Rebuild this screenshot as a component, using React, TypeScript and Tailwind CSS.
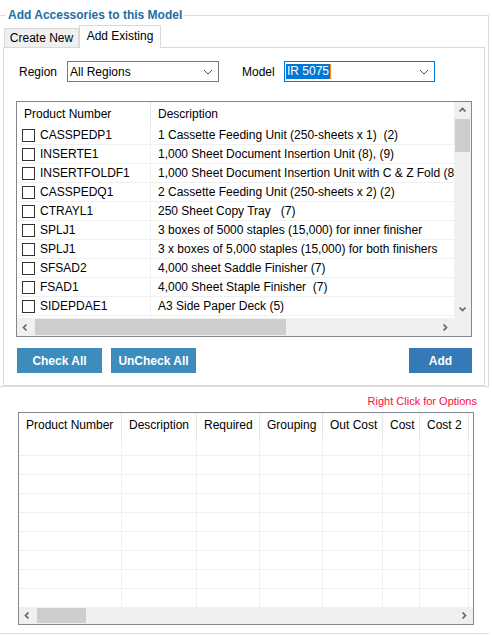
import React from "react";

const ITEMS: { code: string; desc: string }[] = [
  { code: "CASSPEDP1", desc: "1 Cassette Feeding Unit (250-sheets x 1)  (2)" },
  { code: "INSERTE1", desc: "1,000 Sheet Document Insertion Unit (8), (9)" },
  { code: "INSERTFOLDF1", desc: "1,000 Sheet Document Insertion Unit with C & Z Fold (8), (9)" },
  { code: "CASSPEDQ1", desc: "2 Cassette Feeding Unit (250-sheets x 2) (2)" },
  { code: "CTRAYL1", desc: "250 Sheet Copy Tray   (7)" },
  { code: "SPLJ1", desc: "3 boxes of 5000 staples (15,000) for inner finisher" },
  { code: "SPLJ1", desc: "3 x boxes of 5,000 staples (15,000) for both finishers" },
  { code: "SFSAD2", desc: "4,000 sheet Saddle Finisher (7)" },
  { code: "FSAD1", desc: "4,000 Sheet Staple Finisher  (7)" },
  { code: "SIDEPDAE1", desc: "A3 Side Paper Deck (5)" },
];

const COLUMNS: { label: string; width: string }[] = [
  { label: "Product Number", width: "w-[103px]" },
  { label: "Description", width: "w-[75px]" },
  { label: "Required", width: "w-[63px]" },
  { label: "Grouping", width: "w-[63px]" },
  { label: "Out Cost", width: "w-[60px]" },
  { label: "Cost", width: "w-[37px]" },
  { label: "Cost 2", width: "w-[49px]" },
];

function Arrow({ dir }: { dir: "up" | "down" | "left" | "right" }) {
  const d = {
    up: "M1.5 5.5 L4.5 2.5 L7.5 5.5",
    down: "M1.5 2.5 L4.5 5.5 L7.5 2.5",
    left: "M5.5 1.5 L2.5 4.5 L5.5 7.5",
    right: "M2.5 1.5 L5.5 4.5 L2.5 7.5",
  }[dir];
  return (
    <svg width="9" height="9" viewBox="0 0 9 9">
      <path d={d} fill="none" stroke="#606060" strokeWidth="1.6" />
    </svg>
  );
}

function Chevron() {
  return (
    <svg width="10" height="6" viewBox="0 0 10 6">
      <path d="M1 1 L5 5 L9 1" fill="none" stroke="#4d4d4d" strokeWidth="1" />
    </svg>
  );
}

function Checkbox() {
  return <span className="h-[13px] w-[13px] shrink-0 border border-[#333333] bg-white" />;
}

function Button({ label, className }: { label: string; className: string }) {
  return (
    <button className={`h-[25px] text-[12px] font-bold text-white ${className}`}>{label}</button>
  );
}

export default function App() {
  return (
    <div className="h-[635px] w-[492px] overflow-hidden bg-white font-['Liberation_Sans',Arial,sans-serif] text-[12px] text-black">
      <fieldset className="mt-[7px] w-[489px] border border-l-0 border-[#dcdcdc]">
        <legend className="ml-[6px] px-[2px] text-[12px] leading-[16px] font-bold text-[#236ea6]">
          Add Accessories to this Model
        </legend>

        <div className="flex h-[24px] items-end pl-[4px]">
          <div className="flex h-[19px] w-[75px] items-center justify-center border border-b-0 border-[#d9d9d9] bg-[#f0f0f0]">
            Create New
          </div>
          <div className="relative z-10 -mb-px flex h-[23px] w-[82px] items-center justify-center border border-b-0 border-[#d9d9d9] bg-white pb-[2px]">
            Add Existing
          </div>
        </div>

        <div className="ml-[3px] h-[339px] w-[482px] border border-[#d9d9d9] bg-white">
          {/* filters */}
          <div className="mt-[13px] flex h-[21px] items-center">
            <span className="ml-[15px] w-[48px]">Region</span>
            <div className="flex h-[21px] w-[152px] items-center justify-between border border-[#7a7a7a] pr-[5px] pl-[2px]">
              <span>All Regions</span>
              <Chevron />
            </div>
            <span className="ml-[23px] w-[42px]">Model</span>
            <div className="flex h-[21px] w-[151px] items-center justify-between border border-[#0078d7] pr-[5px] pl-[1px]">
              <span className="border-r border-[#ff8c1a] bg-[#0078d7] pr-[1px] pl-[1px] leading-[15px] text-white">
                IR 5075
              </span>
              <Chevron />
            </div>
          </div>

          {/* accessory list */}
          <div className="mt-[19px] ml-[12px] flex h-[236px] w-[456px] flex-col border border-[#828790]">
            <div className="flex h-[216px]">
              <div className="w-[437px] overflow-hidden">
                <div className="flex h-[24px] items-center">
                  <div className="w-[134px] border-r border-[#e5e5e5] pl-[7px] leading-[24px]">Product Number</div>
                  <div className="pl-[7px]">Description</div>
                </div>
                {ITEMS.map((item, i) => (
                  <div key={i} className="flex h-[19px] items-center border-b border-[#f0f0f0] whitespace-pre">
                    <div className="flex h-full w-[134px] shrink-0 items-center gap-[5px] border-r border-[#f0f0f0] pl-[5px]">
                      <Checkbox />
                      {item.code}
                    </div>
                    <div className="pl-[7px]">{item.desc}</div>
                  </div>
                ))}
                <div className="h-[2px] w-[134px] border-r border-[#f0f0f0]" />
              </div>
              <div className="flex w-[17px] flex-col bg-[#f0f0f0]">
                <div className="flex h-[17px] items-center justify-center">
                  <Arrow dir="up" />
                </div>
                <div className="mx-auto h-[33px] w-[15px] bg-[#cdcdcd]" />
                <div className="flex-1" />
                <div className="flex h-[17px] items-center justify-center">
                  <Arrow dir="down" />
                </div>
              </div>
            </div>
            <div className="flex h-[18px] bg-[#f0f0f0]">
              <div className="flex w-[17px] items-center justify-center">
                <Arrow dir="left" />
              </div>
              <div className="flex flex-1 items-center">
                <div className="ml-[1px] h-[16px] w-[251px] bg-[#cdcdcd]" />
              </div>
              <div className="flex w-[17px] items-center justify-center">
                <Arrow dir="right" />
              </div>
              <div className="w-[17px] bg-[#f0f0f0]" />
            </div>
          </div>

          {/* actions */}
          <div className="mt-[11px] ml-[13px] flex w-[455px] items-center">
            <Button label="Check All" className="w-[85px] bg-[#3c8dbc]" />
            <Button label="UnCheck All" className="ml-[9px] w-[85px] bg-[#3c8dbc]" />
            <Button label="Add" className="ml-auto w-[63px] bg-[#337ab7]" />
          </div>
        </div>
      </fieldset>

      <div className="mt-[8px] pr-[15px] text-right text-[11px] leading-[13px] text-[#ff0a3c]">
        Right Click for Options
      </div>

      {/* selected accessories grid */}
      <div className="mt-[4px] ml-[18px] flex h-[213px] w-[456px] flex-col border border-[#828790]">
        <div className="flex h-[24px] items-center">
          {COLUMNS.map((col) => (
            <div key={col.label} className={`${col.width} h-full border-r border-[#e5e5e5] pl-[7px] leading-[24px] whitespace-nowrap`}>
              {col.label}
            </div>
          ))}
        </div>
        <div className="flex-1 overflow-hidden">
          {Array.from({ length: 9 }).map((_, i) => (
            <div key={i} className={`flex h-[19px] ${i < 8 ? "border-b border-[#f0f0f0]" : ""}`}>
              {COLUMNS.map((col) => (
                <div key={col.label} className={`${col.width} h-full border-r border-[#f0f0f0]`} />
              ))}
            </div>
          ))}
        </div>
        <div className="flex h-[17px] bg-[#f0f0f0]">
          <div className="flex w-[17px] items-center justify-center">
            <Arrow dir="left" />
          </div>
          <div className="flex flex-1 items-center">
            <div className="ml-[1px] h-[15px] w-[49px] bg-[#cdcdcd]" />
          </div>
          <div className="flex w-[17px] items-center justify-center">
            <Arrow dir="right" />
          </div>
        </div>
      </div>

      <div className="mt-[8px] w-[489px] border-t border-[#dcdcdc]" />
    </div>
  );
}
